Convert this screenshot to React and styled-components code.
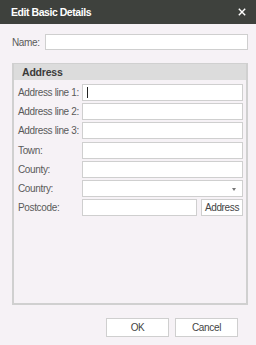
import React from "react";
import styled, { createGlobalStyle } from "styled-components";

const Global = createGlobalStyle`
  html, body { margin: 0; padding: 0; background: #f6f2f6; }
  * { box-sizing: border-box; }
`;

const Dialog = styled.div`
  width: 256px;
  height: 345px;
  background: #f6f2f6;
  font-family: "Liberation Sans", Arial, sans-serif;
  font-size: 10px;
  letter-spacing: -0.35px;
  color: #555;
  display: flex;
  flex-direction: column;
  overflow: hidden;
`;

const TitleBar = styled.div`
  height: 24px;
  flex: 0 0 24px;
  background: #3e413d;
  color: #fff;
  display: flex;
  align-items: center;
  justify-content: space-between;
  padding: 0 10px 0 11px;
`;

const Title = styled.div`
  font-weight: bold;
  font-size: 10.5px;
  letter-spacing: -0.45px;
`;

const Close = styled.svg`
  width: 8px;
  height: 8px;
`;

const Body = styled.div`
  padding: 10px 8px 0 12px;
  display: flex;
  flex-direction: column;
`;

const NameRow = styled.div`
  display: flex;
  align-items: center;
  gap: 5px;
`;

const Label = styled.label`
  color: #5a5a5a;
  white-space: nowrap;
`;

const Input = styled.div`
  height: ${(p) => p.$h || 17}px;
  background: #fff;
  border: 1px solid #cfcfcf;
  flex: ${(p) => (p.$grow ? 1 : "none")};
  position: relative;
`;

const Caret = styled.span`
  position: absolute;
  left: 4px;
  top: 2px;
  width: 1px;
  height: 11px;
  background: #222;
`;

const Arrow = styled.span`
  position: absolute;
  right: 6px;
  top: 7px;
  width: 0;
  height: 0;
  border-left: 2.5px solid transparent;
  border-right: 2.5px solid transparent;
  border-top: 3px solid #777;
`;

const Group = styled.div`
  margin-top: 13px;
  height: 242px;
  border: 2px solid #d0d0d0;
  border-top-width: 1px;
  display: flex;
  flex-direction: column;
`;

const GroupHeader = styled.div`
  height: 16px;
  background: #dcdcdc;
  color: #3a3a3a;
  font-weight: bold;
  font-size: 10.5px;
  letter-spacing: -0.2px;
  line-height: 16px;
  padding-left: 8px;
`;

const Grid = styled.div`
  display: grid;
  grid-template-columns: 64px 161px;
  grid-auto-rows: 17px;
  row-gap: 2.2px;
  padding: 4px 0 0 4px;
  align-items: center;
`;

const SplitCell = styled.div`
  display: flex;
  gap: 4px;
  height: 17px;
`;

const SmallButton = styled.div`
  width: 42px;
  height: 17px;
  background: #fff;
  border: 1px solid #cfcfcf;
  color: #444;
  display: flex;
  align-items: center;
  justify-content: center;
`;

const Footer = styled.div`
  display: flex;
  justify-content: flex-end;
  gap: 6px;
  padding: 13px 10px 0 0;
`;

const Button = styled.div`
  width: 63px;
  height: 19px;
  background: #fff;
  border: 1px solid #cfcfcf;
  color: #444;
  display: flex;
  align-items: center;
  justify-content: center;
`;

const rows = ["Address line 1:", "Address line 2:", "Address line 3:", "Town:", "County:"];

export default function App() {
  return (
    <>
      <Global />
      <Dialog>
        <TitleBar>
          <Title>Edit Basic Details</Title>
          <Close viewBox="0 0 8 8">
            <path d="M0.8 0.8L7.2 7.2M7.2 0.8L0.8 7.2" stroke="#fff" strokeWidth="1.4" />
          </Close>
        </TitleBar>
        <Body>
          <NameRow>
            <Label>Name:</Label>
            <Input $grow $h={16} />
          </NameRow>
          <Group>
            <GroupHeader>Address</GroupHeader>
            <Grid>
              {rows.map((r, i) => (
                <React.Fragment key={r}>
                  <Label>{r}</Label>
                  <Input>{i === 0 && <Caret />}</Input>
                </React.Fragment>
              ))}
              <Label>Country:</Label>
              <Input>
                <Arrow />
              </Input>
              <Label>Postcode:</Label>
              <SplitCell>
                <Input $grow />
                <SmallButton>Address</SmallButton>
              </SplitCell>
            </Grid>
          </Group>
          <Footer>
            <Button>OK</Button>
            <Button>Cancel</Button>
          </Footer>
        </Body>
      </Dialog>
    </>
  );
}
